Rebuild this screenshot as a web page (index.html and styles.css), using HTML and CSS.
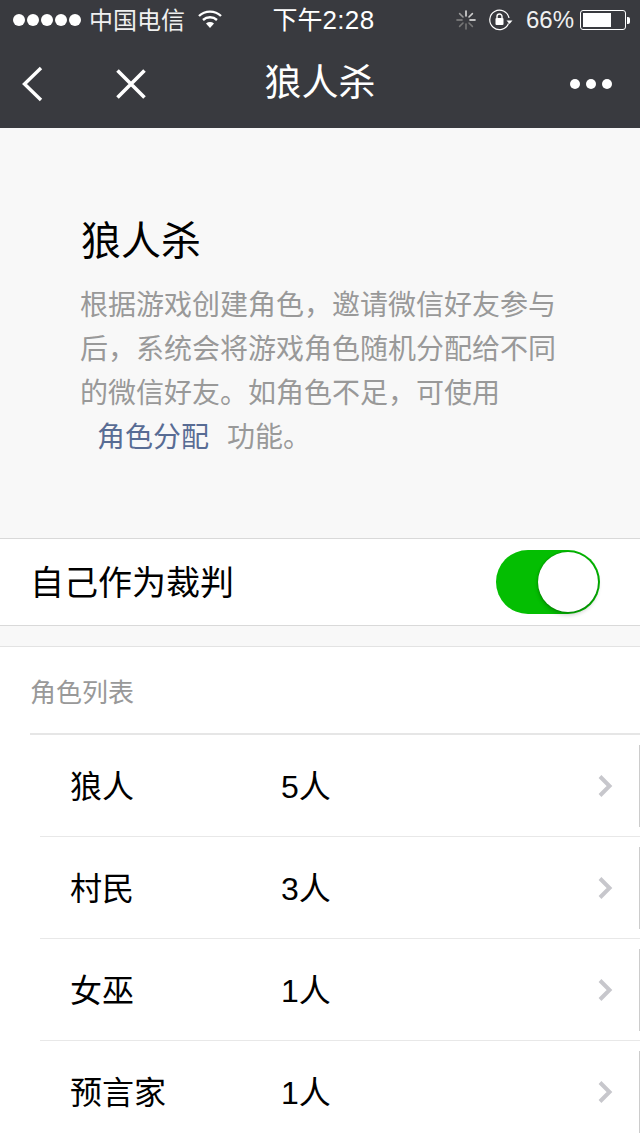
FILE: index.html
```html
<!DOCTYPE html>
<html lang="zh">
<head>
<meta charset="utf-8">
<title>狼人杀</title>
<link rel="stylesheet" href="styles.css">
</head>
<body>
<header class="topbar">
  <div class="status">
    <div class="status-left">
      <span class="dots"><i></i><i></i><i></i><i></i><i></i></span>
      <span class="carrier">中国电信</span>
      <svg class="wifi" width="24" height="20" viewBox="0 0 24 20"><path d="M1 7C7 1.2 17 1.2 23 7" fill="none" stroke="#fff" stroke-width="2.4"/><path d="M5 11C9 7.4 15 7.4 19 11" fill="none" stroke="#fff" stroke-width="2.4"/><path d="M8 14.4C10.4 12.6 13.6 12.6 16 14.4L12 19Z" fill="#fff"/></svg>
    </div>
    <div class="clock">下午<span class="clock-time">2:28</span></div>
    <div class="status-right">
      <svg class="spinner" width="20" height="20" viewBox="0 0 20 20" stroke-width="1.6" stroke-linecap="round"><path d="M10 1V6" stroke="#ddd"/><path d="M16.4 3.6L13 7" stroke="#ccc"/><path d="M19 10H14" stroke="#eee"/><path d="M16.4 16.4L13 13" stroke="#777"/><path d="M10 19V14" stroke="#777"/><path d="M3.6 16.4L7 13" stroke="#777"/><path d="M1 10H6" stroke="#888"/><path d="M3.6 3.6L7 7" stroke="#999"/></svg>
      <svg class="lock" width="24" height="22" viewBox="0 0 24 22"><path d="M19.5 14.5A9.7 9.7 0 1 1 20 9" fill="none" stroke="#fff" stroke-width="1.2"/><path d="M17.5 11.5H23.5L20.5 15Z" fill="#fff"/><rect x="6.5" y="9" width="8" height="7" rx="1" fill="#fff"/><path d="M8 9V7.5a2.5 2.5 0 0 1 5 0V9" fill="none" stroke="#fff" stroke-width="1.4"/></svg>
      <span class="percent">66%</span>
      <span class="battery"><span class="battery-fill"></span></span><span class="battery-tip"></span>
    </div>
  </div>
  <nav class="navbar">
    <div class="nav-left">
      <svg class="back" width="24" height="36" viewBox="0 0 24 36"><path d="M21 2L4.5 18L21 34" fill="none" stroke="#fff" stroke-width="3.4"/></svg>
      <svg class="close" width="30" height="30" viewBox="0 0 30 30"><path d="M1.5 1.5L28.5 28.5M28.5 1.5L1.5 28.5" fill="none" stroke="#fff" stroke-width="3.6"/></svg>
    </div>
    <h1 class="nav-title">狼人杀</h1>
    <div class="more"><i></i><i></i><i></i></div>
  </nav>
</header>

<main class="page">
  <section class="intro">
    <h2 class="intro-title">狼人杀</h2>
    <p class="intro-text">根据游戏创建角色，邀请微信好友参与后，系统会将游戏角色随机分配给不同的微信好友。如角色不足，可使用<br><a class="link">角色分配</a><span class="after-link">功能。</span></p>
  </section>

  <section class="judge">
    <span class="judge-label">自己作为裁判</span>
    <div class="switch"><div class="knob"></div></div>
  </section>

  <section class="roles">
    <div class="roles-head">角色列表</div>
    <ul class="role-list">
      <li class="role"><span class="role-name">狼人</span><span class="role-count">5人</span><svg class="chevron" width="16" height="24" viewBox="0 0 16 24"><path d="M3 2.5L12.5 12L3 21.5" fill="none" stroke="#c7c7cc" stroke-width="4"/></svg></li>
      <li class="role"><span class="role-name">村民</span><span class="role-count">3人</span><svg class="chevron" width="16" height="24" viewBox="0 0 16 24"><path d="M3 2.5L12.5 12L3 21.5" fill="none" stroke="#c7c7cc" stroke-width="4"/></svg></li>
      <li class="role"><span class="role-name">女巫</span><span class="role-count">1人</span><svg class="chevron" width="16" height="24" viewBox="0 0 16 24"><path d="M3 2.5L12.5 12L3 21.5" fill="none" stroke="#c7c7cc" stroke-width="4"/></svg></li>
      <li class="role"><span class="role-name">预言家</span><span class="role-count">1人</span><svg class="chevron" width="16" height="24" viewBox="0 0 16 24"><path d="M3 2.5L12.5 12L3 21.5" fill="none" stroke="#c7c7cc" stroke-width="4"/></svg></li>
    </ul>
  </section>
</main>
</body>
</html>
```
FILE: styles.css
```css
* { box-sizing: border-box; }
html, body { margin: 0; padding: 0; }
html { overflow: hidden; }
body {
  width: 640px;
  height: 1136px;
  overflow: hidden;
  background: #fff;
  color: #000;
  font-family: "Liberation Sans", "Noto Sans CJK SC", sans-serif;
}
.topbar { background: #393a3f; color: #fff; height: 128px; }
.status {
  height: 40px;
  display: grid;
  grid-template-columns: 1fr auto 1fr;
  align-items: center;
  padding: 0 10px 0 13px;
  font-size: 24px;
}
.status-left, .status-right { display: flex; align-items: center; }
.status-right { justify-content: flex-end; }
.dots { display: flex; gap: 2px; }
.dots i { width: 12px; height: 12px; border-radius: 50%; background: #fff; }
.carrier { margin-left: 8px; padding-bottom: 4px; font-size: 24px; color: #f0f0f0; }
.wifi { margin-left: 13px; margin-bottom: 2px; }
.clock { font-size: 25px; padding-bottom: 4px; margin-left: 4px; }
.clock-time { font-size: 26px; letter-spacing: 0.4px; }
.spinner { margin-right: 13px; }
.lock { margin-right: 13px; }
.percent { font-size: 24px; margin-right: 6px; color: #f0f0f0; }
.battery {
  width: 46px; height: 20px;
  border: 1.5px solid #fff; border-radius: 3px;
  padding: 2px; display: block;
}
.battery-fill { display: block; width: 28px; height: 100%; background: #fff; }
.battery-tip { width: 3px; height: 7px; background: #fff; margin-left: 1px; border-radius: 0 2px 2px 0; }
.navbar {
  height: 88px;
  display: grid;
  grid-template-columns: 1fr auto 1fr;
  align-items: center;
}
.nav-left { display: flex; align-items: center; padding-left: 20px; }
.back { margin-right: 72px; }
.nav-title { margin: 0; font-size: 37px; font-weight: 400; line-height: 88px; }
.more { display: flex; justify-content: flex-end; gap: 6px; padding-right: 28px; }
.more i { width: 10px; height: 10px; border-radius: 50%; background: #fff; }

.page { background: #f8f8f8; height: 1008px; overflow: hidden; }
.intro {
  background: #f8f8f8;
  height: 410px;
  padding: 88px 80px 0 80px;
}
.intro-title { margin: 0 0 18px 1px; font-size: 40px; font-weight: 400; line-height: 50px; }
.intro-text { margin: 0; font-size: 28px; line-height: 44px; color: #999; }
.link { color: #586c94; margin-left: 17px; }
.after-link { margin-left: 18px; }

.judge {
  height: 88px;
  border-top: 1px solid #d9d9d9;
  border-bottom: 1px solid #d9d9d9;
  display: flex;
  align-items: center;
  justify-content: space-between;
  padding: 0 40px 0 30px;
  background: #fff;
}
.judge-label { font-size: 34px; padding-bottom: 4px; }
.switch {
  width: 104px; height: 64px;
  border-radius: 32px;
  background: #04be02;
  display: flex;
  justify-content: flex-end;
  align-items: center;
  padding-right: 2px;
}
.knob {
  width: 60px; height: 60px;
  border-radius: 50%;
  background: #fff;
  box-shadow: 0 0 2px rgba(0,0,0,.35), 0 3px 4px rgba(0,0,0,.2);
}
.roles {
  margin-top: 20px;
  border-top: 1px solid #e3e3e3;
  background: #fff;
  height: 490px;
  overflow: hidden;
}
.roles-head {
  height: 88px;
  margin-left: 30px;
  border-bottom: 2px solid #e6e6e6;
  line-height: 92px;
  font-size: 26px;
  color: #999;
}
.role-list { list-style: none; margin: 0; padding: 0 0 0 40px; }
.role {
  height: 102px;
  display: flex;
  align-items: center;
  border-bottom: 1px solid #e8e8e8;
  padding-left: 30px;
  position: relative;
  font-size: 32px;
}
.role::after {
  content: "";
  position: absolute;
  right: 0;
  top: 10px;
  height: 82px;
  width: 1px;
  background: #ccc;
}
.role-name { width: 211px; padding-bottom: 4px; }
.role-count { flex: 1; padding-bottom: 4px; }
.chevron { margin-right: 27px; }
```
